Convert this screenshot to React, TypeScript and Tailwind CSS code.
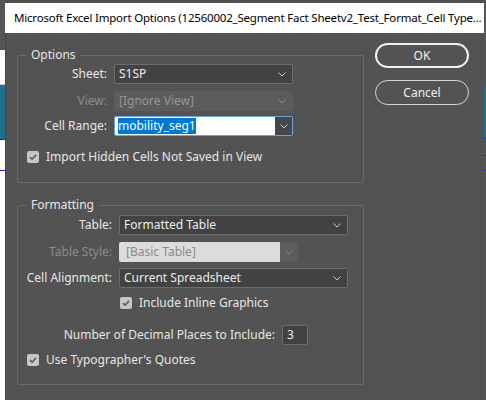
import React from "react";

const Chevron = ({ color = "#c8c8c8" }: { color?: string }) => (
  <svg width="8" height="5" viewBox="0 0 8 5" className="shrink-0">
    <path d="M0.5 0.5 L4 4 L7.5 0.5" stroke={color} strokeWidth="1" fill="none" />
  </svg>
);

const Check = () => (
  <div className="w-[12px] h-[12px] rounded-[2px] bg-[#c6c6c6] flex items-center justify-center shrink-0">
    <svg width="10" height="10" viewBox="0 0 10 10">
      <path d="M2 5.2 L4.1 7.2 L8 2.9" stroke="#5e5e5e" strokeWidth="1.6" fill="none" />
    </svg>
  </div>
);

export default function App() {
  return (
    <div className="w-[486px] h-[400px] overflow-hidden flex bg-[#535353] font-['Noto_Sans',sans-serif] text-[12px] leading-[16px]">
      {/* left background strip */}
      <div className="w-[5px] flex flex-col shrink-0">
        <div className="h-[50px] bg-[#555555]" />
        <div className="h-[34px] bg-white" />
        <div className="h-[1px] bg-[#e2b4e0]" />
        <div className="h-[54px] bg-[#1f6f8e]" />
        <div className="h-[1px] bg-[#2a2ac0]" />
        <div className="h-[30px] bg-white" />
        <div className="h-[1px] bg-[#2a2ac0]" />
        <div className="flex-1 bg-white" />
      </div>

      {/* dialog */}
      <div className="flex-1 flex flex-col">
        <div className="h-[3px] bg-[#4e4e4e]" />
        <div className="h-[30px] bg-white pl-[9px] flex items-center overflow-hidden whitespace-nowrap text-black text-[11.5px] tracking-[-0.2px]">
          Microsoft Excel Import Options (12560002_Segment Fact Sheetv2_Test_Format_Cell Type...
        </div>
        <div className="flex-1 bg-[#535353] border-l border-[#454545] flex pl-[11px] pt-[10px] gap-[11px]">
          {/* left column */}
          <div className="w-[347px] pt-[4px] flex flex-col">
            <fieldset className="border border-[#6a6a6a] rounded-[2px] pb-[19px]">
              <legend className="ml-[9px] px-[4px] leading-[16px] text-[#e6e6e6]">Options</legend>
              <div className="mt-[1px] h-[20px] flex items-center gap-[7px]">
                <div className="w-[89px] text-right text-[#e6e6e6]">Sheet:</div>
                <div className="w-[179px] h-[20px] rounded-[2px] bg-[#424242] border border-[#6c6c6c] flex items-center justify-between pl-[4px] pr-[6px] text-[#ececec]">
                  <span>S1SP</span>
                  <Chevron />
                </div>
              </div>
              <div className="mt-[7px] h-[20px] flex items-center gap-[7px]">
                <div className="w-[89px] text-right text-[#8c8c8c]">View:</div>
                <div className="w-[179px] h-[20px] rounded-[2px] bg-[#5c5c5c] flex items-center justify-between pl-[5px] pr-[7px] text-[#969696]">
                  <span>[Ignore View]</span>
                  <Chevron color="#8a8a8a" />
                </div>
              </div>
              <div className="mt-[5px] h-[20px] flex items-center gap-[7px]">
                <div className="w-[89px] text-right text-[#e6e6e6]">Cell Range:</div>
                <div className="w-[179px] h-[20px] rounded-[2px] border border-[#6aa5dc] flex overflow-hidden">
                  <div className="flex-1 bg-white flex items-center pl-[3px]">
                    <span className="bg-[#0078d7] text-white leading-[16px]">mobility_seg1</span>
                  </div>
                  <div className="w-[17px] bg-[#464646] flex items-center justify-center">
                    <Chevron />
                  </div>
                </div>
              </div>
              <div className="mt-[15px] h-[12px] flex items-center gap-[7px] pl-[9px]">
                <Check />
                <span className="text-[#e6e6e6]">Import Hidden Cells Not Saved in View</span>
              </div>
            </fieldset>

            <fieldset className="mt-[14px] border border-[#6a6a6a] rounded-[2px] pb-[18px]">
              <legend className="ml-[9px] px-[4px] leading-[16px] text-[#e6e6e6]">Formatting</legend>
              <div className="mt-[2px] h-[20px] flex items-center gap-[7px]">
                <div className="w-[94px] text-right text-[#e6e6e6]">Table:</div>
                <div className="w-[229px] h-[20px] rounded-[2px] bg-[#424242] border border-[#6c6c6c] flex items-center justify-between pl-[4px] pr-[6px] text-[#ececec]">
                  <span>Formatted Table</span>
                  <Chevron />
                </div>
              </div>
              <div className="mt-[7px] h-[20px] flex items-center gap-[7px]">
                <div className="w-[94px] text-right text-[#8c8c8c]">Table Style:</div>
                <div className="w-[179px] h-[20px] rounded-[2px] flex overflow-hidden">
                  <div className="flex-1 bg-[#dcdcdc] flex items-center pl-[7px] text-[#8a8a8a]">[Basic Table]</div>
                  <div className="w-[18px] bg-[#5c5c5c] flex items-center justify-center">
                    <Chevron color="#8a8a8a" />
                  </div>
                </div>
              </div>
              <div className="mt-[6px] h-[20px] flex items-center gap-[7px]">
                <div className="w-[94px] text-right text-[#e6e6e6]">Cell Alignment:</div>
                <div className="w-[229px] h-[20px] rounded-[2px] bg-[#424242] border border-[#6c6c6c] flex items-center justify-between pl-[4px] pr-[6px] text-[#ececec]">
                  <span>Current Spreadsheet</span>
                  <Chevron />
                </div>
              </div>
              <div className="mt-[9px] h-[12px] flex items-center gap-[7px] pl-[102px]">
                <Check />
                <span className="text-[#e6e6e6]">Include Inline Graphics</span>
              </div>
              <div className="mt-[16px] h-[20px] flex items-center gap-[7px]">
                <div className="w-[257px] text-right text-[#e6e6e6]">Number of Decimal Places to Include:</div>
                <div className="w-[26px] h-[20px] rounded-[2px] bg-[#424242] border border-[#6c6c6c] flex items-center pl-[4px] text-[#ececec]">
                  3
                </div>
              </div>
              <div className="mt-[9px] h-[12px] flex items-center gap-[7px] pl-[9px]">
                <Check />
                <span className="text-[#e6e6e6]">Use Typographer's Quotes</span>
              </div>
            </fieldset>
          </div>

          {/* buttons */}
          <div className="w-[94px] flex flex-col">
            <div className="h-[25px] rounded-full border-2 border-[#f2f2f2] flex items-center justify-center text-[#f2f2f2]">
              OK
            </div>
            <div className="mt-[12px] h-[25px] rounded-full border border-[#d6d6d6] flex items-center justify-center text-[#f0f0f0]">
              Cancel
            </div>
          </div>
        </div>
      </div>

      {/* right background strip */}
      <div className="w-[2px] flex flex-col shrink-0">
        <div className="h-[85px] bg-[#555555]" />
        <div className="h-[53px] bg-[#1f6f8e]" />
        <div className="h-[1px] bg-[#2a2ac0]" />
        <div className="h-[16px] bg-[#555555]" />
        <div className="h-[1px] bg-[#2a2ac0]" />
        <div className="h-[14px] bg-[#555555]" />
        <div className="h-[1px] bg-[#2a2ac0]" />
        <div className="flex-1 bg-[#555555]" />
      </div>
    </div>
  );
}
